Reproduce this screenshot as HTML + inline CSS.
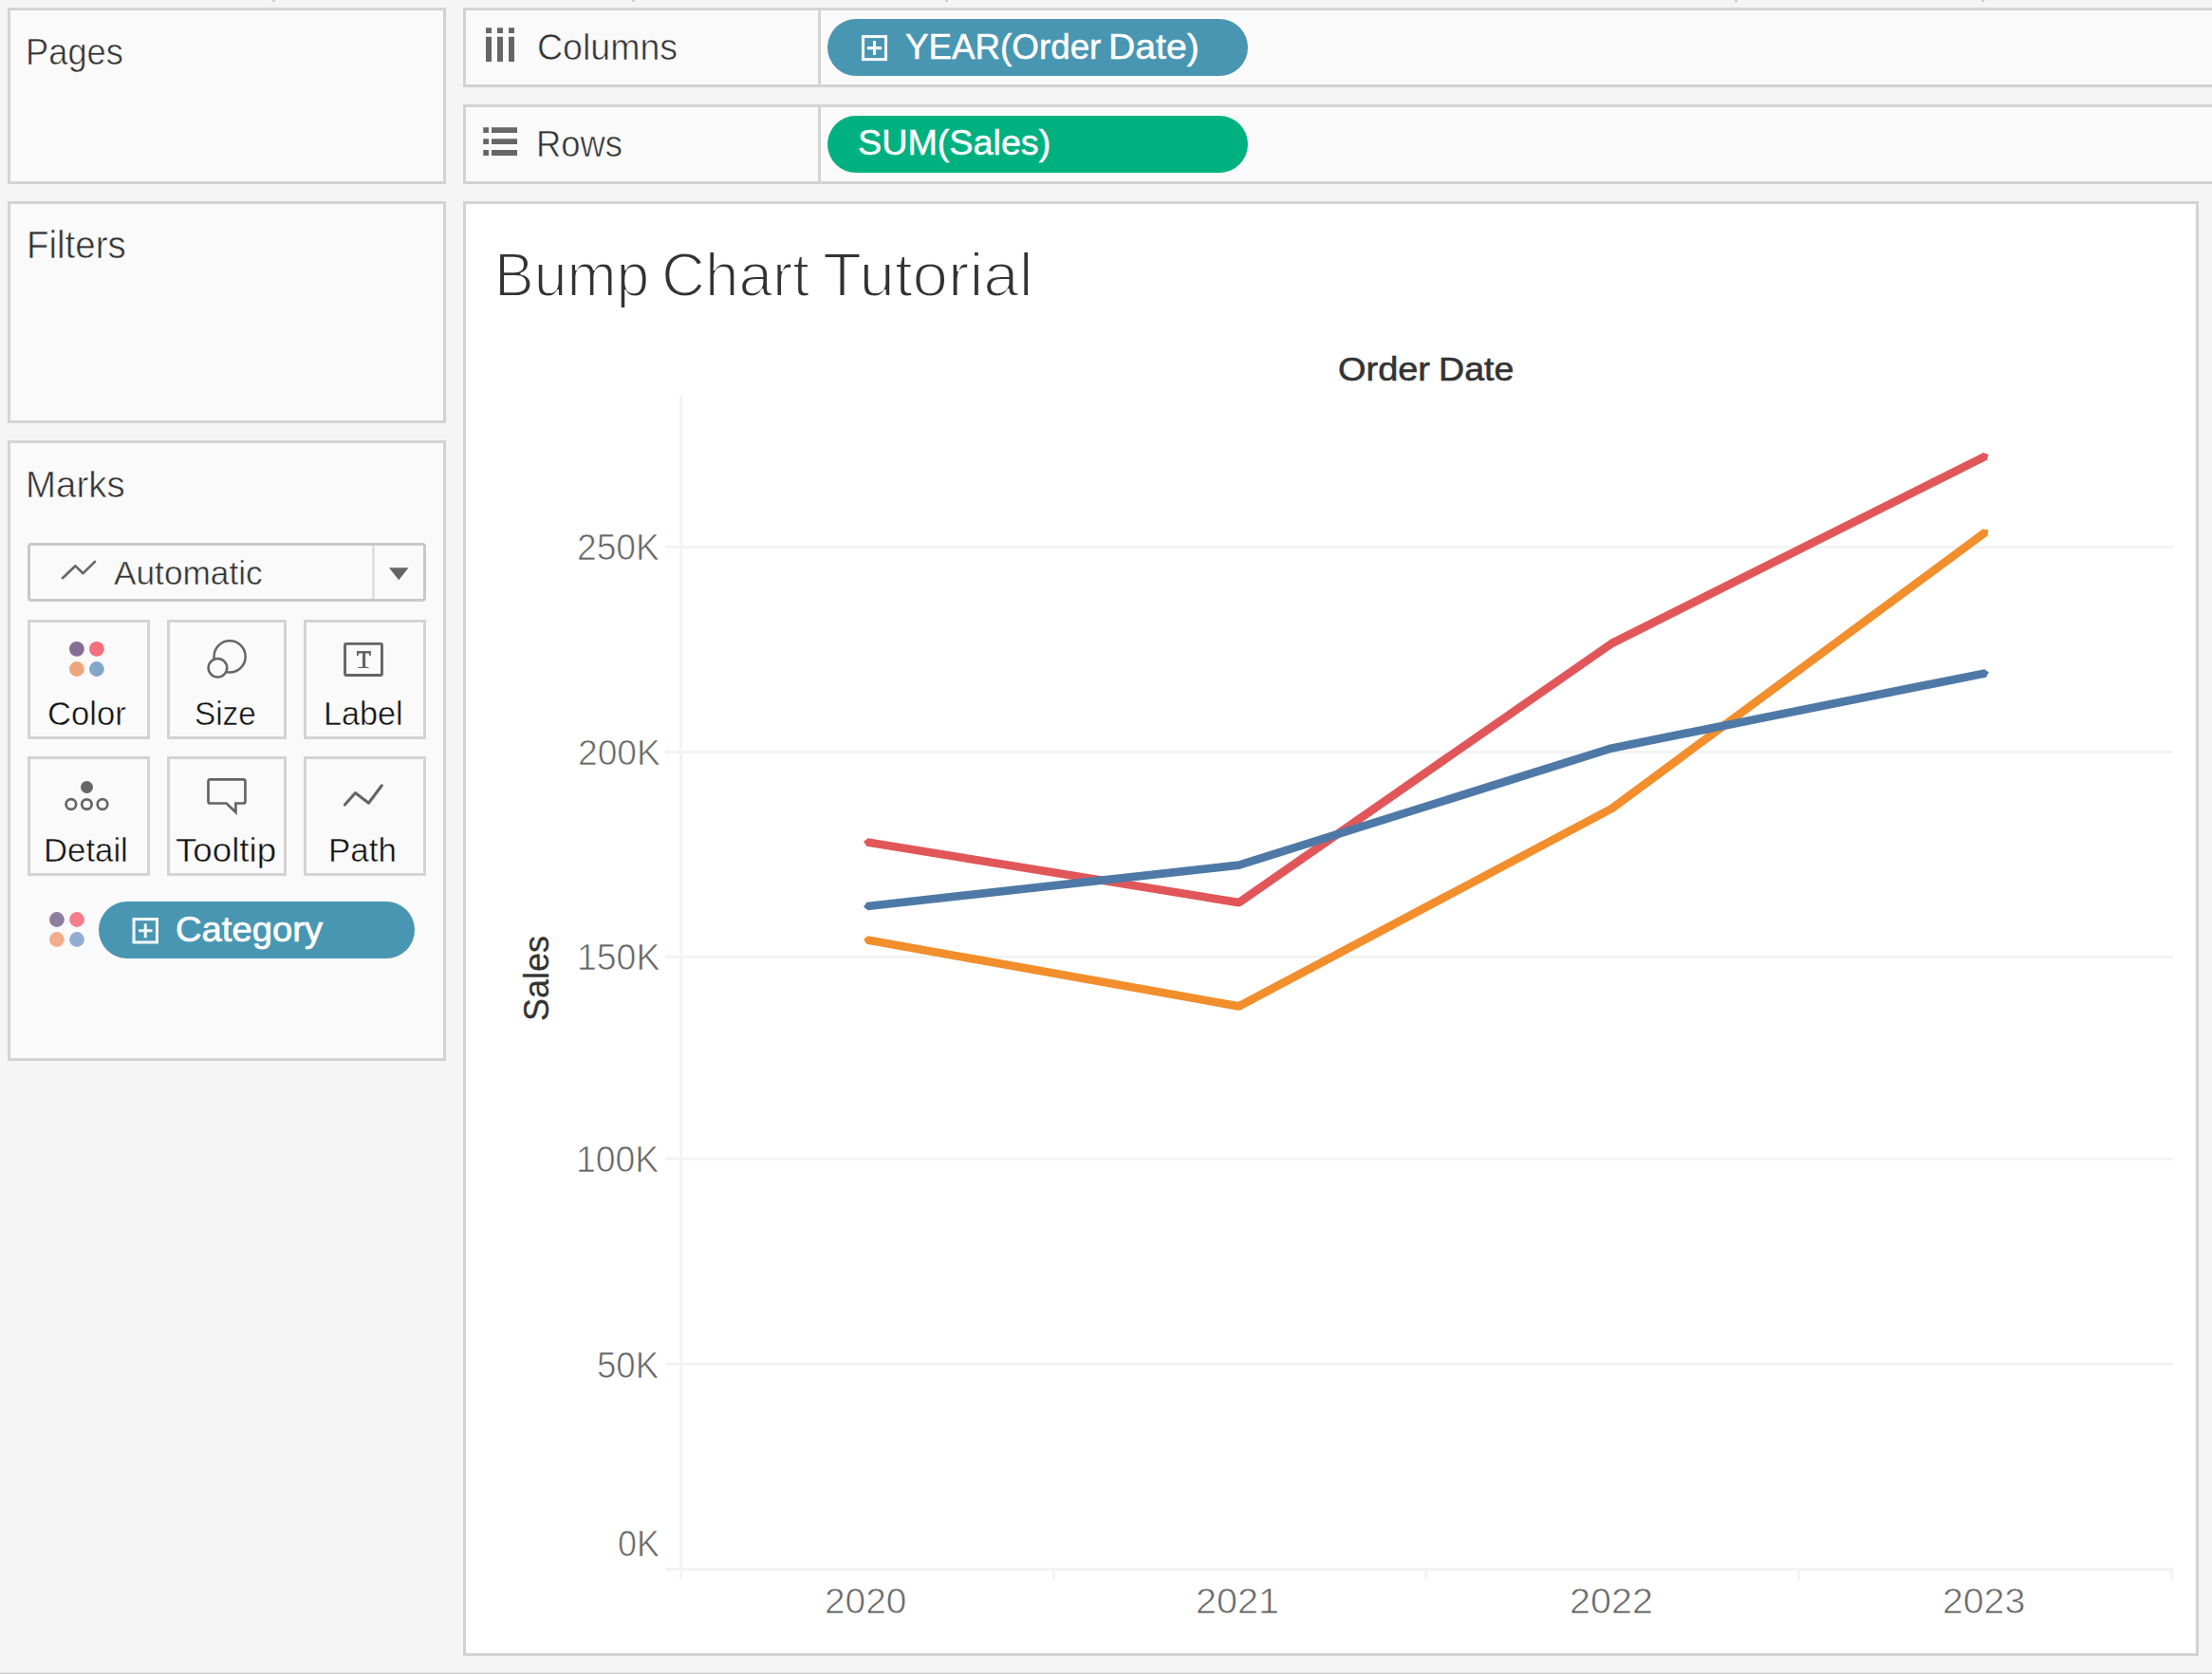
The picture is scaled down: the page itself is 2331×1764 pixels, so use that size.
<!DOCTYPE html>
<html><head><meta charset="utf-8"><title>Bump Chart Tutorial</title>
<style>
html,body{margin:0;padding:0;}
body{width:2331px;height:1764px;overflow:hidden;background:#f5f5f5;position:relative;font-family:"Liberation Sans",sans-serif;}
.box{position:absolute;box-sizing:border-box;border:3px solid #d3d3d3;background:#fafafa;}
.t{position:absolute;white-space:nowrap;line-height:1;transform-origin:left top;font-family:"Liberation Sans",sans-serif;}
.btn{position:absolute;box-sizing:border-box;border:3px solid #d3d3d3;background:#fafafa;}
.pill{position:absolute;height:60px;border-radius:30px;}
svg{position:absolute;left:0;top:0;overflow:visible;}
</style></head><body>
<!-- top edge ticks -->
<div style="position:absolute;left:287px;top:0;width:3px;height:2px;background:#d0d0d0"></div>
<div style="position:absolute;left:666px;top:0;width:3px;height:2px;background:#d0d0d0"></div>
<div style="position:absolute;left:996px;top:0;width:3px;height:2px;background:#d0d0d0"></div>
<div style="position:absolute;left:1828px;top:0;width:3px;height:2px;background:#d0d0d0"></div>
<div style="position:absolute;left:2088px;top:0;width:3px;height:2px;background:#d0d0d0"></div>
<div style="position:absolute;left:0;top:1762px;width:2331px;height:1px;background:#e8e8e8"></div>
<div style="position:absolute;left:0;top:1763px;width:2331px;height:1px;background:#c6c6c6"></div>

<!-- left panels -->
<div class="box" style="left:8px;top:8px;width:462px;height:186px"></div>
<div class="box" style="left:8px;top:212px;width:462px;height:234px"></div>
<div class="box" style="left:8px;top:464px;width:462px;height:654px"></div>

<!-- shelves -->
<div class="box" style="left:488px;top:8px;width:1900px;height:84px"></div>
<div class="box" style="left:488px;top:110px;width:1900px;height:84px"></div>
<div style="position:absolute;left:862px;top:11px;width:3px;height:78px;background:#d3d3d3"></div>
<div style="position:absolute;left:862px;top:113px;width:3px;height:78px;background:#d3d3d3"></div>

<!-- viz -->
<div class="box" style="left:488px;top:212px;width:1829px;height:1533px;background:#fff"></div>

<!-- pills -->
<div class="pill" style="left:872px;top:20px;width:443px;background:#4996b2"></div>
<div class="pill" style="left:872px;top:122px;width:443px;background:#00b180"></div>
<div class="pill" style="left:104px;top:950px;width:333px;background:#4996b2"></div>

<!-- marks dropdown -->
<div style="position:absolute;box-sizing:border-box;left:29px;top:572px;width:420px;height:62px;border:3px solid #c8c8c8;border-radius:4px;background:#fafafa"></div>
<div style="position:absolute;left:392px;top:575px;width:3px;height:56px;background:#e0e0e0"></div>

<!-- marks buttons -->
<div class="btn" style="left:29px;top:653px;width:129px;height:126px"></div>
<div class="btn" style="left:176px;top:653px;width:126px;height:126px"></div>
<div class="btn" style="left:320px;top:653px;width:129px;height:126px"></div>
<div class="btn" style="left:29px;top:797px;width:129px;height:126px"></div>
<div class="btn" style="left:176px;top:797px;width:126px;height:126px"></div>
<div class="btn" style="left:320px;top:797px;width:129px;height:126px"></div>

<svg width="2331" height="1764" viewBox="0 0 2331 1764">
<!-- columns icon -->
<g fill="#666">
<rect x="512" y="29.25" width="6" height="5.75"/><rect x="512" y="38.75" width="6" height="26.25"/>
<rect x="524" y="29.25" width="6" height="5.75"/><rect x="524" y="38.75" width="6" height="26.25"/>
<rect x="536" y="29.25" width="6" height="5.75"/><rect x="536" y="38.75" width="6" height="26.25"/>
<!-- rows icon -->
<rect x="509.25" y="134.25" width="5.75" height="5.75"/><rect x="518" y="134.25" width="27" height="5.75"/>
<rect x="509.25" y="146.25" width="5.75" height="5.75"/><rect x="518" y="146.25" width="27" height="5.75"/>
<rect x="509.25" y="158" width="5.75" height="6"/><rect x="518" y="158" width="27" height="6"/>
<!-- dropdown arrow -->
<path d="M410 598.25 L430.5 598.25 L420.25 611.25 Z"/>
</g>
<!-- expand icons -->
<g fill="none" stroke="#f2f7f9" stroke-width="3.1">
<rect x="909.5" y="38.5" width="24" height="24.1"/>
<path d="M913.8 50.65 H929.1 M921.5 42.9 V58.1"/>
<rect x="141.05" y="968.55" width="24.4" height="24.4"/>
<path d="M146 980.75 H160.6 M153.25 973.2 V988.3"/>
</g>
<!-- automatic line icon -->
<path d="M65.9 609.2 L79.5 596.3 L87.5 604.2 L100 591.8" fill="none" stroke="#666" stroke-width="2.6" stroke-linecap="round" stroke-linejoin="round"/>
<!-- color dots -->
<circle cx="80.9" cy="683.9" r="7.9" fill="#856e96"/>
<circle cx="101.9" cy="683.9" r="7.9" fill="#f46f7d"/>
<circle cx="80.9" cy="705" r="7.9" fill="#f0a67b"/>
<circle cx="101.9" cy="705" r="7.9" fill="#83a6cb"/>
<!-- small color dots -->
<circle cx="59.9" cy="969" r="7.9" fill="#8f7da0"/>
<circle cx="81.05" cy="969" r="7.9" fill="#f67e8b"/>
<circle cx="59.9" cy="990" r="7.9" fill="#f1ae88"/>
<circle cx="81.05" cy="990" r="7.9" fill="#91aed2"/>
<!-- size icon -->
<g fill="#fafafa" stroke="#666" stroke-width="2.5">
<circle cx="242.1" cy="691.9" r="16.55"/>
<circle cx="229.4" cy="703.7" r="9.8"/>
</g>
<!-- label icon -->
<rect x="363.55" y="678.35" width="38.9" height="33.1" rx="1" fill="none" stroke="#646464" stroke-width="2.9"/>
<path d="M376 686.1 H390.9 V691 H389.5 L388.6 688.5 H385.15 V702.7 L388.5 703.1 V703.9 H377.2 V703.1 L381.95 702.7 V688.5 H378.3 L377.4 691 H376 Z" fill="#666"/>
<!-- detail icon -->
<circle cx="91.5" cy="829.5" r="6.5" fill="#666"/>
<g fill="none" stroke="#666" stroke-width="2.7">
<circle cx="74.9" cy="847.5" r="5.3"/><circle cx="91.45" cy="847.5" r="5.2"/><circle cx="108" cy="847.5" r="5.3"/>
</g>
<!-- tooltip icon -->
<path d="M221.5 821.4 H256.45 Q258.45 821.4 258.45 823.4 V844.5 Q258.45 846.5 256.45 846.5 H248.4 V855.8 L238.6 846.5 H221.5 Q219.5 846.5 219.5 844.5 V823.4 Q219.5 821.4 221.5 821.4 Z" fill="none" stroke="#646464" stroke-width="2.7" stroke-linejoin="miter"/>
<!-- path icon -->
<path d="M363.4 848.1 L374.5 835.5 L388.5 846.2 L402.3 827.8" fill="none" stroke="#666" stroke-width="3.1" stroke-linecap="round" stroke-linejoin="round"/>

<!-- chart -->
<g stroke="#f3f3f3" stroke-width="3" fill="none">
<path d="M717.6 416 V1664"/>
<path d="M701.2 576.5 H2290"/>
<path d="M701.2 792.4 H2290"/>
<path d="M701.2 1008.2 H2290"/>
<path d="M701.2 1221.3 H2290"/>
<path d="M701.2 1437.4 H2290"/>
<path d="M701.2 1653.4 H2290"/>
<path d="M1110.2 1653 V1664 M1502.6 1653 V1664 M1895.6 1653 V1664 M2288.7 1653 V1664"/>
</g>
<g fill="none" stroke-width="8.7" stroke-linejoin="bevel" stroke-linecap="butt">
<path d="M914 990.5 L1305.6 1060.4 L1698.5 852 L2092 561" stroke="#f28e2b"/><polygon points="915.26,986.31 914.76,986.22 910.06,989.80 913.24,994.78 913.73,994.87" fill="#f28e2b" stroke="none"/><polygon points="2094.18,564.79 2094.59,564.50 2095.22,558.62 2089.41,557.50 2089.01,557.80" fill="#f28e2b" stroke="none"/>
<path d="M914 887.5 L1305.6 951.1 L1698.5 678 L2092 480.9" stroke="#e15759"/><polygon points="915.19,883.29 914.70,883.21 910.05,886.86 913.30,891.79 913.80,891.87" fill="#e15759" stroke="none"/><polygon points="2093.50,485.01 2093.95,484.79 2095.58,479.11 2090.05,477.01 2089.60,477.23" fill="#e15759" stroke="none"/>
<path d="M914 955 L1305.6 911.6 L1698.5 788.4 L2092 709.4" stroke="#4e79a7"/><polygon points="914.02,950.62 913.52,950.68 910.02,955.44 914.48,959.32 914.98,959.27" fill="#4e79a7" stroke="none"/><polygon points="2092.37,713.76 2092.86,713.66 2095.92,708.61 2091.14,705.14 2090.65,705.23" fill="#4e79a7" stroke="none"/>
</g>
</svg>

<span class="t" style="left:27.46px;top:34.82px;font-size:39.03px;color:#333;transform:scaleX(0.93);-webkit-text-stroke:0.6px #fafafa;">Pages</span>
<span class="t" style="left:27.94px;top:239.46px;font-size:39.75px;color:#333;transform:scaleX(0.9675);-webkit-text-stroke:0.6px #fafafa;">Filters</span>
<span class="t" style="left:26.91px;top:491.07px;font-size:39.03px;color:#333;transform:scaleX(0.9855);-webkit-text-stroke:0.6px #fafafa;">Marks</span>
<span class="t" style="left:120.32px;top:586.21px;font-size:35.25px;color:#333;transform:scaleX(0.9994);-webkit-text-stroke:0.5px #fafafa;">Automatic</span>
<span class="t" style="left:49.5px;top:733.61px;font-size:35.97px;color:#111;transform:scaleX(0.9617);-webkit-text-stroke:0.5px #fafafa;">Color</span>
<span class="t" style="left:205.18px;top:733.61px;font-size:35.97px;color:#111;transform:scaleX(0.9263);-webkit-text-stroke:0.5px #fafafa;">Size</span>
<span class="t" style="left:340.5px;top:733.61px;font-size:35.97px;color:#111;transform:scaleX(0.9501);-webkit-text-stroke:0.5px #fafafa;">Label</span>
<span class="t" style="left:46.42px;top:877.86px;font-size:35.97px;color:#111;transform:scaleX(0.9661);-webkit-text-stroke:0.5px #fafafa;">Detail</span>
<span class="t" style="left:185.42px;top:877.86px;font-size:35.97px;color:#111;transform:scaleX(1.0202);-webkit-text-stroke:0.5px #fafafa;">Tooltip</span>
<span class="t" style="left:346.38px;top:877.86px;font-size:35.97px;color:#111;transform:scaleX(0.971);-webkit-text-stroke:0.5px #fafafa;">Path</span>
<span class="t" style="left:185.41px;top:961.88px;font-size:36.41px;color:#fff;transform:scaleX(1.0493);-webkit-text-stroke:0.7px #fff;">Category</span>
<span class="t" style="left:565.72px;top:31.74px;font-size:37.94px;color:#333;transform:scaleX(0.9891);-webkit-text-stroke:0.6px #fafafa;">Columns</span>
<span class="t" style="left:564.96px;top:132.32px;font-size:39.03px;color:#333;transform:scaleX(0.9308);-webkit-text-stroke:0.6px #fafafa;">Rows</span>
<span class="t" style="left:954.04px;top:31.12px;font-size:37.43px;color:#fff;transform:scaleX(0.9824);-webkit-text-stroke:0.5px #fff;">YEAR(Order</span>
<span class="t" style="left:1168.38px;top:31.12px;font-size:37.43px;color:#fff;transform:scaleX(1.0467);-webkit-text-stroke:0.5px #fff;">Date)</span>
<span class="t" style="left:903.72px;top:131.87px;font-size:37.43px;color:#fff;transform:scaleX(1.0079);-webkit-text-stroke:0.5px #fff;">SUM(Sales)</span>
<span class="t" style="left:520.71px;top:256.91px;font-size:65.55px;color:#333;transform:scaleX(0.954);-webkit-text-stroke:2.0px #fff;">Bump</span>
<span class="t" style="left:697.02px;top:256.91px;font-size:65.55px;color:#333;transform:scaleX(0.9731);-webkit-text-stroke:2.0px #fff;">Chart</span>
<span class="t" style="left:866.77px;top:256.91px;font-size:65.55px;color:#333;transform:scaleX(1.0255);-webkit-text-stroke:2.0px #fff;">Tutorial</span>
<span class="t" style="left:1409.78px;top:372.26px;font-size:35.9px;color:#333;transform:scaleX(1.0572);-webkit-text-stroke:0.6px #333;">Order</span>
<span class="t" style="left:1515.5px;top:372.26px;font-size:35.9px;color:#333;transform:scaleX(1.0466);-webkit-text-stroke:0.6px #333;">Date</span>
<span class="t" style="left:608.47px;top:557.95px;font-size:38.23px;color:#666;transform:scaleX(0.9725);-webkit-text-stroke:0.7px #fff;">250K</span>
<span class="t" style="left:608.69px;top:775.23px;font-size:37.72px;color:#666;transform:scaleX(0.9854);-webkit-text-stroke:0.7px #fff;">200K</span>
<span class="t" style="left:607.72px;top:989.93px;font-size:38.37px;color:#666;transform:scaleX(0.9749);-webkit-text-stroke:0.7px #fff;">150K</span>
<span class="t" style="left:607.22px;top:1203.17px;font-size:38.08px;color:#666;transform:scaleX(0.981);-webkit-text-stroke:0.7px #fff;">100K</span>
<span class="t" style="left:629.38px;top:1420.42px;font-size:38.08px;color:#666;transform:scaleX(0.9597);-webkit-text-stroke:0.7px #fff;">50K</span>
<span class="t" style="left:651.22px;top:1607.73px;font-size:38.37px;color:#666;transform:scaleX(0.935);-webkit-text-stroke:0.7px #fff;">0K</span>
<span class="t" style="left:869.12px;top:1668.79px;font-size:37.35px;color:#666;transform:scaleX(1.0407);-webkit-text-stroke:0.7px #fff;">2020</span>
<span class="t" style="left:1260.48px;top:1668.79px;font-size:37.35px;color:#666;transform:scaleX(1.0609);-webkit-text-stroke:0.7px #fff;">2021</span>
<span class="t" style="left:1653.98px;top:1668.79px;font-size:37.35px;color:#666;transform:scaleX(1.0589);-webkit-text-stroke:0.7px #fff;">2022</span>
<span class="t" style="left:2047.0px;top:1668.79px;font-size:37.35px;color:#666;transform:scaleX(1.0503);-webkit-text-stroke:0.7px #fff;">2023</span>
<span class="t" style="left:0;top:0;font-size:37.3px;color:#333;transform:translate(546.56px,1075.98px) rotate(-90deg) scaleX(0.9645);-webkit-text-stroke:0.25px #333;">Sales</span>
</body></html>
